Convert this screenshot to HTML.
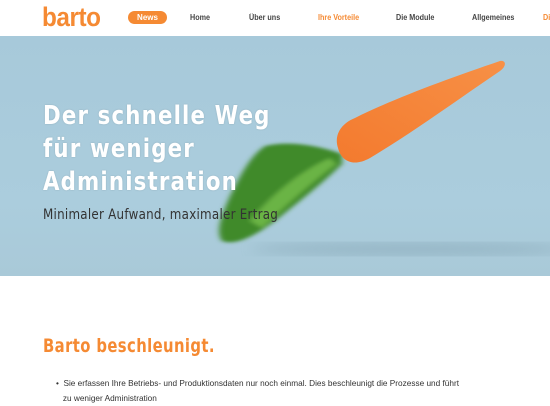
<!DOCTYPE html>
<html><head><meta charset="utf-8"><style>
*{margin:0;padding:0;box-sizing:border-box}
body{width:550px;height:400px;overflow:hidden;background:#fff;font-family:"Liberation Sans",sans-serif;position:relative}
.nav{position:absolute;top:0;left:0;width:550px;height:36px;background:#fff}
.logo{position:absolute;left:42px;top:2px;font-size:27px;font-weight:bold;color:#f58a33;letter-spacing:-0.5px;transform:scaleX(0.9);transform-origin:left}
.news{position:absolute;left:128px;top:11px;width:39px;height:13px;background:#f58a33;border-radius:7px;color:#fff;font-size:8px;font-weight:bold;text-align:center;line-height:13px}
.ni{position:absolute;top:13px;font-size:8px;font-weight:bold;color:#444;transform:scaleX(0.9);transform-origin:left}
.hero{position:absolute;top:36px;left:0;width:550px;height:240px;background:linear-gradient(#a7c9da,#abcddd 70%,#a9c9d8)}
.h1{position:absolute;left:43px;top:64px;color:#fff;font-size:26px;font-weight:bold;line-height:33px;letter-spacing:1.4px;font-family:"DejaVu Sans",sans-serif;text-shadow:0 0 2px rgba(0,0,0,.15);transform:scaleX(0.82);transform-origin:left;white-space:nowrap}
.sub{position:absolute;left:43px;top:171px;color:#333;font-size:14px;letter-spacing:0.3px;font-family:"DejaVu Sans",sans-serif;transform:scaleX(0.85);transform-origin:left;white-space:nowrap}
h2{position:absolute;left:43px;top:335px;color:#f58a33;font-size:19px;font-weight:bold;letter-spacing:0.5px;font-family:"DejaVu Sans",sans-serif;transform:scaleX(0.78);transform-origin:left;white-space:nowrap}
.p{position:absolute;left:56px;top:376px;font-size:8.5px;color:#333;line-height:15px;transform:scaleX(0.97);transform-origin:left;white-space:nowrap}
</style></head><body>
<div class="nav">
<div class="logo">barto</div>
<div class="news">News</div>
<div class="ni" style="left:190px">Home</div>
<div class="ni" style="left:249px">Über uns</div>
<div class="ni" style="left:318px;color:#f58a33">Ihre Vorteile</div>
<div class="ni" style="left:396px">Die Module</div>
<div class="ni" style="left:472px">Allgemeines</div>
<div class="ni" style="left:543px;color:#f58a33">Di</div>
</div>
<div class="hero">
<svg width="550" height="240" style="position:absolute;left:0;top:0">
<defs><filter id="b"><feGaussianBlur stdDeviation="6"/></filter><filter id="m"><feGaussianBlur stdDeviation="3 1.5"/></filter>
<linearGradient id="c" x1="0" y1="1" x2="1" y2="0"><stop offset="0" stop-color="#f37a2e"/><stop offset="1" stop-color="#f79046"/></linearGradient></defs>
<ellipse cx="410" cy="213" rx="160" ry="6" fill="#7f9fae" opacity=".5" filter="url(#b)"/>
<g filter="url(#m)">
<path d="M342 118 C315 108 285 105 265 110 C250 120 240 140 230 160 C222 178 215 195 222 205 C235 210 255 200 275 185 C300 165 325 145 342 128 Z" fill="#3f8a2a"/>
<path d="M330 122 C300 135 270 160 250 185 L262 192 C285 170 310 148 336 128 Z" fill="#6ab444"/>
</g>
<path d="M338 112 C334 100 340 88 355 82 C395 62 450 42 500 25 C507 24 506 31 500 35 C460 62 415 95 370 122 C352 132 341 124 338 112 Z" fill="url(#c)"/>
</svg>
<div class="h1">Der schnelle Weg<br>für weniger<br>Administration</div>
<div class="sub">Minimaler Aufwand, maximaler Ertrag</div>
</div>
<h2>Barto beschleunigt.</h2>
<div class="p">•&nbsp;&nbsp;Sie erfassen Ihre Betriebs- und Produktionsdaten nur noch einmal. Dies beschleunigt die Prozesse und führt<br>&nbsp;&nbsp;&nbsp;zu weniger Administration</div>
</body></html>
